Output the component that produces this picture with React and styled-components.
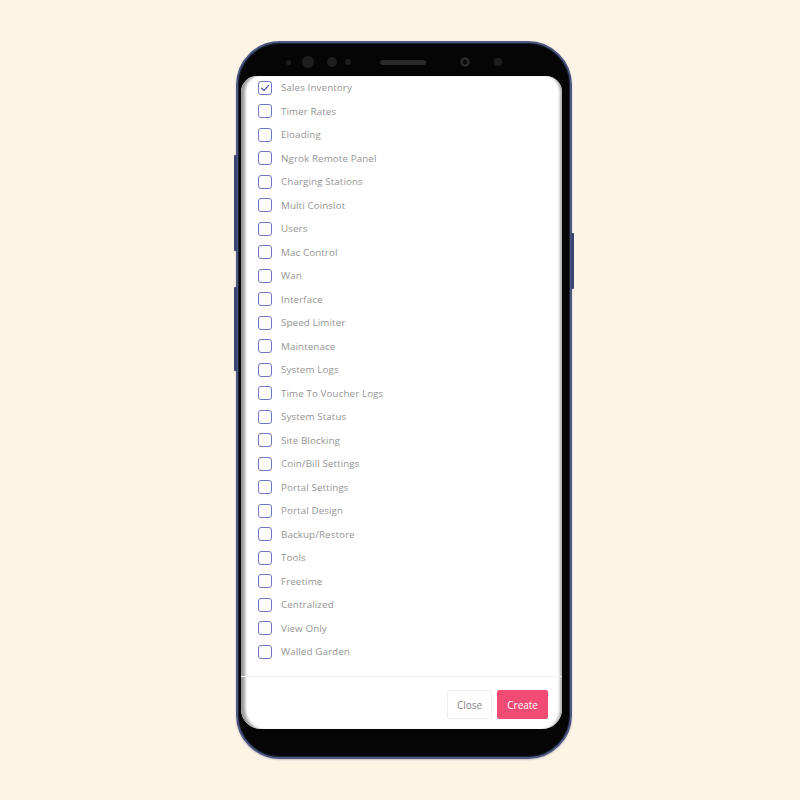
import React, { useState } from 'react';
import styled, { createGlobalStyle } from 'styled-components';

const GlobalStyle = createGlobalStyle`
  html, body {
    margin: 0;
    padding: 0;
    background: #fdf4e6;
  }
  * { box-sizing: border-box; }
`;

const Page = styled.div`
  width: 800px;
  height: 800px;
  display: flex;
  justify-content: center;
  padding: 41px 0 0 8px;
  background: #fdf4e6;
  font-family: "Open Sans", "Noto Sans", sans-serif;
`;

const Phone = styled.div`
  position: relative;
  width: 336px;
  height: 718px;
  border-radius: 44px;
  background: #050505;
  border: 2px solid #4d5883;
  box-shadow: inset 0 0 0 1px #1c2238, 0 1px 2px rgba(40, 50, 90, 0.25);
  display: flex;
  flex-direction: column;
  padding: 0 8px 0 3px;
`;

const SideKey = styled.div`
  position: absolute;
  width: 3px;
  top: ${p => p.top}px;
  height: ${p => p.len}px;
  ${p => (p.right ? 'right: -4px;' : 'left: -4px;')}
  background: #3b4470;
  border-radius: 1px;
`;

const TopBezel = styled.div`
  height: 33px;
  flex-shrink: 0;
  display: flex;
  align-items: center;
  padding-top: 5px;
`;

const Dot = styled.div`
  width: ${p => p.size}px;
  height: ${p => p.size}px;
  margin-left: ${p => p.gap}px;
  border-radius: 50%;
  background: ${p => p.lens
    ? 'radial-gradient(circle at 50% 50%, #0a0a0a 30%, #3a3a3a 45%, #111 70%)'
    : '#1e1e1e'};
  flex-shrink: 0;
`;

const Speaker = styled.div`
  width: 46px;
  height: 5px;
  margin-left: ${p => p.gap}px;
  border-radius: 3px;
  background: #2a2a2a;
`;

const Screen = styled.div`
  flex: 1;
  background: #fff;
  border-radius: 16px 16px 20px 20px;
  display: flex;
  flex-direction: column;
  overflow: hidden;
  box-shadow: inset 6px 0 3px -2px #9c9c9c, inset -4px 0 3px -2px #a8a8a8;
`;

const List = styled.div`
  display: flex;
  flex-direction: column;
  padding: 0 0 0 17px;
  flex: 1;
`;

const Row = styled.label`
  height: 23.5px;
  display: flex;
  align-items: center;
  gap: 9px;
  cursor: pointer;
`;

const Box = styled.span`
  width: 14px;
  height: 14px;
  border: 1px solid #6f76c6;
  border-radius: 3px;
  display: flex;
  align-items: center;
  justify-content: center;
  flex-shrink: 0;
  background: #fff;
`;

const Label = styled.span`
  font-size: 9.8px;
  font-weight: 400;
  color: #959595;
  letter-spacing: 0.1px;
`;

const Footer = styled.div`
  border-top: 1px solid #efefef;
  height: 53px;
  flex-shrink: 0;
  display: flex;
  justify-content: flex-end;
  align-items: flex-start;
  padding: 13px 14px 0 0;
  gap: 5px;
`;

const Button = styled.button`
  height: 29px;
  padding: 0 9px;
  border-radius: 2px;
  font-family: inherit;
  font-size: 10px;
  font-weight: 400;
  cursor: pointer;
  border: 1px solid ${p => (p.primary ? '#f24c74' : '#eeeeee')};
  background: ${p => (p.primary ? '#f24c74' : '#fff')};
  color: ${p => (p.primary ? '#fff' : '#858585')};
`;

const BottomBezel = styled.div`
  height: 28px;
  flex-shrink: 0;
`;

const items = [
  'Sales Inventory', 'Timer Rates', 'Eloading', 'Ngrok Remote Panel',
  'Charging Stations', 'Multi Coinslot', 'Users', 'Mac Control', 'Wan',
  'Interface', 'Speed Limiter', 'Maintenace', 'System Logs',
  'Time To Voucher Logs', 'System Status', 'Site Blocking',
  'Coin/Bill Settings', 'Portal Settings', 'Portal Design',
  'Backup/Restore', 'Tools', 'Freetime', 'Centralized', 'View Only',
  'Walled Garden',
];

const Check = () => (
  <svg width="10" height="10" viewBox="0 0 10 10">
    <path d="M1.6 5.2 L4 7.5 L8.6 2.4" fill="none" stroke="#5d64b9" strokeWidth="1.3"
      strokeLinecap="round" strokeLinejoin="round" />
  </svg>
);

export default function App() {
  const [checked, setChecked] = useState({ 'Sales Inventory': true });
  const toggle = name => setChecked(c => ({ ...c, [name]: !c[name] }));

  return (
    <Page>
      <GlobalStyle />
      <Phone>
        <SideKey top={112} len={96} />
        <SideKey top={244} len={84} />
        <SideKey right top={190} len={56} />
        <TopBezel>
          <Dot size={5} gap={44.5} />
          <Dot size={12} gap={11.5} />
          <Dot size={10} gap={13} />
          <Dot size={6} gap={8} />
          <Speaker gap={29} />
          <Dot lens size={10} gap={34} />
          <Dot size={8} gap={24} />
        </TopBezel>
        <Screen>
          <List>
            {items.map(name => (
              <Row key={name} onClick={() => toggle(name)}>
                <Box>{checked[name] && <Check />}</Box>
                <Label>{name}</Label>
              </Row>
            ))}
          </List>
          <Footer>
            <Button>Close</Button>
            <Button primary>Create</Button>
          </Footer>
        </Screen>
        <BottomBezel />
      </Phone>
    </Page>
  );
}
